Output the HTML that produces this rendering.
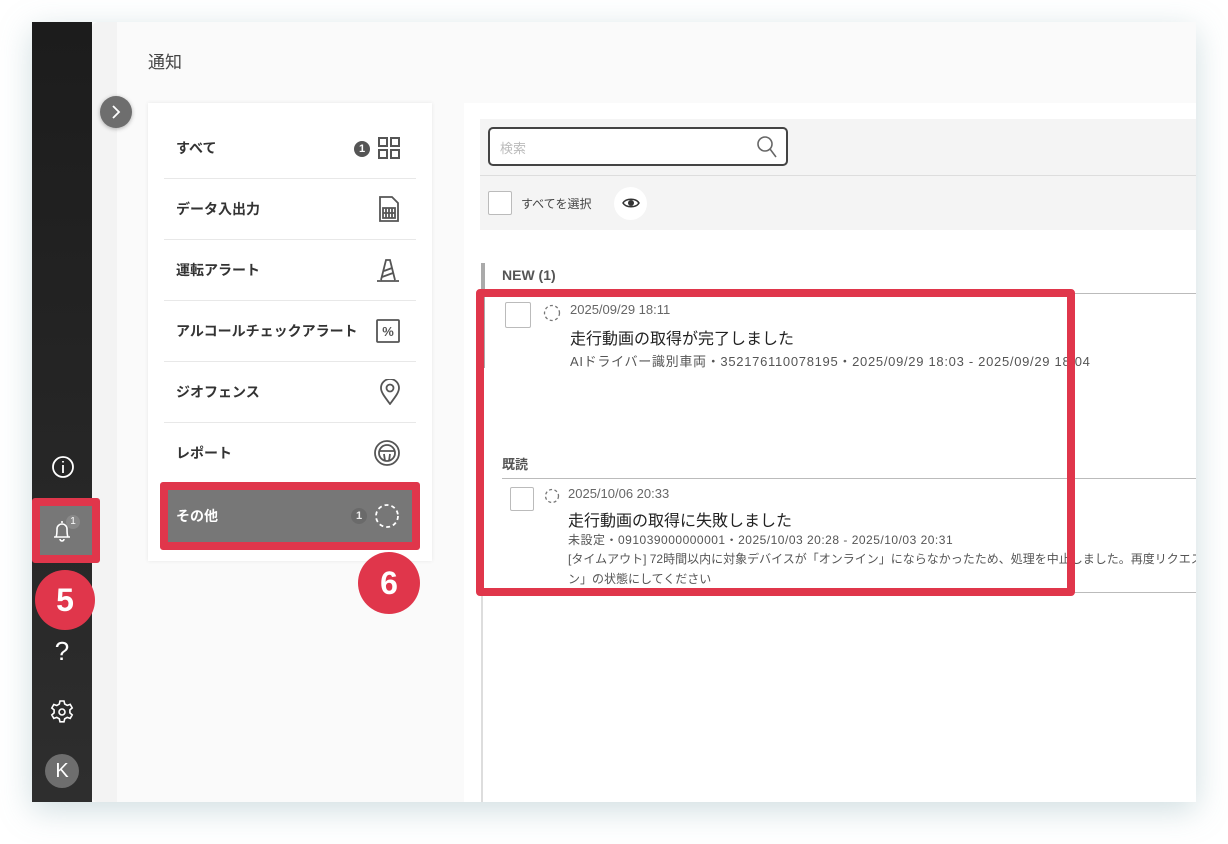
<!DOCTYPE html>
<html><head><meta charset="utf-8">
<style>
*{box-sizing:border-box;margin:0;padding:0}
body{width:1228px;height:844px;background:#fff;position:relative;overflow:hidden;font-family:"Liberation Sans","Noto Sans CJK JP",sans-serif;color:#333}
.abs{position:absolute}
.frame{left:32px;top:22px;width:1164px;height:780px;box-shadow:0 8px 30px rgba(120,160,170,.35);background:#fafafa}
.side{left:32px;top:22px;width:60px;height:780px;background:linear-gradient(#1c1c1c,#2e2e2e)}
.strip{left:92px;top:22px;width:25px;height:780px;background:#f3f3f3;border-radius:6px 0 0 6px}
.title{left:148px;top:48px;font-size:17px;color:#444}
.card{left:148px;top:103px;width:284px;height:458px;background:#fff;box-shadow:0 0 4px rgba(0,0,0,.08)}
.row{position:absolute;left:16px;width:252px;height:61px;border-bottom:1px solid #e8e8e8;font-size:14px;font-weight:bold;color:#333;display:flex;align-items:center;padding-left:12px}
.row svg{position:absolute;right:16px;top:50%;transform:translateY(-50%)}
.right{left:464px;top:103px;width:732px;height:699px;background:#fff}
.tb{left:480px;top:119px;width:716px;height:111px;background:#f4f4f4}
</style></head><body>
<div class="abs frame"></div>
<div class="abs side"></div>
<div class="abs strip"></div>
<div class="abs title">通知</div>
<div class="abs" style="left:100px;top:96px;width:32px;height:32px;border-radius:50%;background:#6e6e6e;box-shadow:0 1px 4px rgba(0,0,0,.3)"><svg width="32" height="32"><path d="M13 10l6 6-6 6" fill="none" stroke="#fff" stroke-width="1.8"/></svg></div>

<div class="abs card">
 <div class="row" style="top:15px">すべて
  <span class="abs" style="right:46px;top:23px;width:16px;height:16px;border-radius:50%;background:#555;color:#fff;font-size:11px;text-align:center;line-height:16px">1</span>
  <svg width="22" height="22" viewBox="0 0 22 22" fill="none" stroke="#555" stroke-width="2"><rect x="1" y="1" width="8" height="8"/><rect x="13" y="1" width="8" height="8"/><rect x="1" y="13" width="8" height="8"/><rect x="13" y="13" width="8" height="8"/></svg></div>
 <div class="row" style="top:76px">データ入出力
  <svg width="22" height="26" viewBox="0 0 22 26" fill="none" stroke="#555" stroke-width="1.8"><path d="M2 1h12l6 6v18H2z"/><path d="M5 12h12v10H5zM5 17h12M11 12v10M8 12v10M14 12v10"/></svg></div>
 <div class="row" style="top:137px">運転アラート
  <svg width="24" height="24" viewBox="0 0 24 24" fill="none" stroke="#555" stroke-width="1.8"><path d="M1 23h22M5 22L10 2h4l5 20M8 13l8-3M6 19l11-4"/></svg></div>
 <div class="row" style="top:198px">アルコールチェックアラート
  <svg width="24" height="24" viewBox="0 0 24 24" fill="none" stroke="#555" stroke-width="1.8"><rect x="1" y="1" width="22" height="22" rx="1"/><text x="12" y="17" font-size="13" text-anchor="middle" fill="#555" stroke="none" font-family="Liberation Sans">%</text></svg></div>
 <div class="row" style="top:259px">ジオフェンス
  <svg width="20" height="26" viewBox="0 0 20 26" fill="none" stroke="#555" stroke-width="1.8"><path d="M10 25C4 17 1 13 1 9a9 9 0 0118 0c0 4-3 8-9 16z"/><circle cx="10" cy="9" r="3.5"/></svg></div>
 <div class="row" style="top:320px">レポート
  <svg width="26" height="26" viewBox="0 0 26 26" fill="none" stroke="#555" stroke-width="1.8"><circle cx="13" cy="13" r="12"/><circle cx="13" cy="13" r="8"/><path d="M5 11h16M10 14l1 7M16 14l-1 7"/></svg></div>
 <div class="row" style="top:386px;left:19px;width:246px;height:54px;background:#777;color:#fff;border:none;padding-left:9px">その他
  <span class="abs" style="right:46px;top:19px;width:16px;height:16px;border-radius:50%;background:#6a6a6a;color:#eee;font-size:11px;text-align:center;line-height:16px">1</span>
  <svg width="26" height="26" viewBox="0 0 26 26" style="right:13px" fill="none" stroke="#fff" stroke-width="1.8" stroke-dasharray="4 3"><circle cx="13" cy="13" r="11"/></svg></div>
</div>
<div class="abs" style="left:160px;top:482px;width:260px;height:68px;border:8px solid #e0364b;border-radius:3px"></div>
<div class="abs" style="left:358px;top:552px;width:62px;height:62px;border-radius:50%;background:#e0364b;color:#fff;font-size:32px;font-weight:bold;text-align:center;line-height:62px">6</div>

<svg class="abs" style="left:51px;top:455px" width="24" height="24" viewBox="0 0 24 24" fill="none" stroke="#fff" stroke-width="1.8"><circle cx="12" cy="12" r="10"/><path d="M12 10v8M12 6v1.5"/></svg>
<div class="abs" style="left:32px;top:498px;width:68px;height:65px;border:8px solid #e0364b;border-radius:3px;background:#777"></div>
<svg class="abs" style="left:50px;top:517px" width="26" height="26" viewBox="0 0 26 26" fill="none" stroke="#fff" stroke-width="1.6"><path d="M4 20h16M6 20c1-2 1-4 1-8a5 5 0 0110 0c0 4 0 6 1 8M10 22a2 2 0 004 0M12 4v2"/></svg>
<div class="abs" style="left:66px;top:515px;width:14px;height:14px;border-radius:50%;background:#888;color:#fff;font-size:10px;text-align:center;line-height:14px">1</div>
<div class="abs" style="left:35px;top:570px;width:60px;height:60px;border-radius:50%;background:#e0364b;color:#fff;font-size:32px;font-weight:bold;text-align:center;line-height:60px">5</div>
<div class="abs" style="left:50px;top:636px;font-size:26px;color:#fff;width:24px;text-align:center">?</div>
<svg class="abs" style="left:49px;top:699px" width="26" height="26" viewBox="0 0 26 26" fill="none" stroke="#fff" stroke-width="1.6"><circle cx="13" cy="13" r="3"/><path d="M11 2h4l.7 3 2.5 1.4 3-1 2 3.5-2.3 2v3l2.3 2-2 3.5-3-1-2.5 1.4-.7 3h-4l-.7-3-2.5-1.4-3 1-2-3.5 2.3-2v-3L2.8 9l2-3.5 3 1L10.3 5z"/></svg>
<div class="abs" style="left:45px;top:754px;width:34px;height:34px;border-radius:50%;background:#6e6e6e;color:#fff;font-size:20px;text-align:center;line-height:34px">K</div>

<div class="abs right"></div>
<div class="abs tb"></div>
<div class="abs" style="left:480px;top:175px;width:716px;height:1px;background:#ddd"></div>
<div class="abs" style="left:488px;top:127px;width:300px;height:39px;border:2px solid #444;border-radius:5px;background:#fff"></div>
<div class="abs" style="left:500px;top:138px;font-size:13px;color:#bbb">検索</div>
<svg class="abs" style="left:756px;top:135px" width="22" height="24" viewBox="0 0 22 24" fill="none" stroke="#666" stroke-width="1.6"><circle cx="9" cy="9" r="7"/><path d="M14 14l6 8"/></svg>
<div class="abs" style="left:488px;top:191px;width:24px;height:24px;border:1.5px solid #bbb;border-radius:2px;background:#fff"></div>
<div class="abs" style="left:521px;top:195px;font-size:12px;color:#444">すべてを選択</div>
<div class="abs" style="left:614px;top:187px;width:33px;height:33px;border-radius:50%;background:#fff"></div>
<svg class="abs" style="left:622px;top:195px" width="18" height="16" viewBox="0 0 18 16"><path d="M1 8c3-5 13-5 16 0-3 5-13 5-16 0z" fill="none" stroke="#333" stroke-width="1.5"/><circle cx="9" cy="8" r="3" fill="#333"/></svg>

<div class="abs" style="left:481px;top:263px;width:4px;height:105px;background:#aaa"></div>
<div class="abs" style="left:481px;top:368px;width:2px;height:434px;background:#ddd"></div>
<div class="abs" style="left:502px;top:267px;font-size:14px;font-weight:bold;color:#555">NEW (1)</div>
<div class="abs" style="left:502px;top:293px;width:694px;height:1px;background:#bbb"></div>
<div class="abs" style="left:505px;top:302px;width:26px;height:26px;border:1.5px solid #bbb;border-radius:2px"></div>
<svg class="abs" style="left:543px;top:304px" width="18" height="18"><circle cx="9" cy="9" r="7.5" fill="none" stroke="#777" stroke-width="1.3" stroke-dasharray="3 2.5"/></svg>
<div class="abs" style="left:570px;top:302px;font-size:13px;color:#666">2025/09/29 18:11</div>
<div class="abs" style="left:570px;top:325px;font-size:16px;color:#222">走行動画の取得が完了しました</div>
<div class="abs" style="left:570px;top:351px;font-size:13px;color:#555;letter-spacing:0.7px;white-space:nowrap">AIドライバー識別車両・352176110078195・2025/09/29 18:03 - 2025/09/29 18:04</div>

<div class="abs" style="left:502px;top:454px;font-size:13px;font-weight:bold;color:#555">既読</div>
<div class="abs" style="left:502px;top:478px;width:694px;height:1px;background:#bbb"></div>
<div class="abs" style="left:510px;top:487px;width:24px;height:24px;border:1.5px solid #bbb;border-radius:2px"></div>
<svg class="abs" style="left:544px;top:488px" width="16" height="16"><circle cx="8" cy="8" r="6.5" fill="none" stroke="#777" stroke-width="1.3" stroke-dasharray="3 2.5"/></svg>
<div class="abs" style="left:568px;top:486px;font-size:13px;color:#666">2025/10/06 20:33</div>
<div class="abs" style="left:568px;top:507px;font-size:16px;color:#222">走行動画の取得に失敗しました</div>
<div class="abs" style="left:568px;top:531px;font-size:12px;color:#555;letter-spacing:0.5px;white-space:nowrap">未設定・091039000000001・2025/10/03 20:28 - 2025/10/03 20:31</div>
<div class="abs" style="left:568px;top:550px;font-size:12px;color:#555;white-space:nowrap;width:628px;overflow:hidden">[タイムアウト] 72時間以内に対象デバイスが「オンライン」にならなかったため、処理を中止しました。再度リクエスト</div>
<div class="abs" style="left:568px;top:570px;font-size:12px;color:#555">ン」の状態にしてください</div>
<div class="abs" style="left:502px;top:592px;width:694px;height:1px;background:#bbb"></div>

<div class="abs" style="left:476px;top:289px;width:599px;height:307px;border:8px solid #e0364b;border-radius:4px"></div>
</body></html>
